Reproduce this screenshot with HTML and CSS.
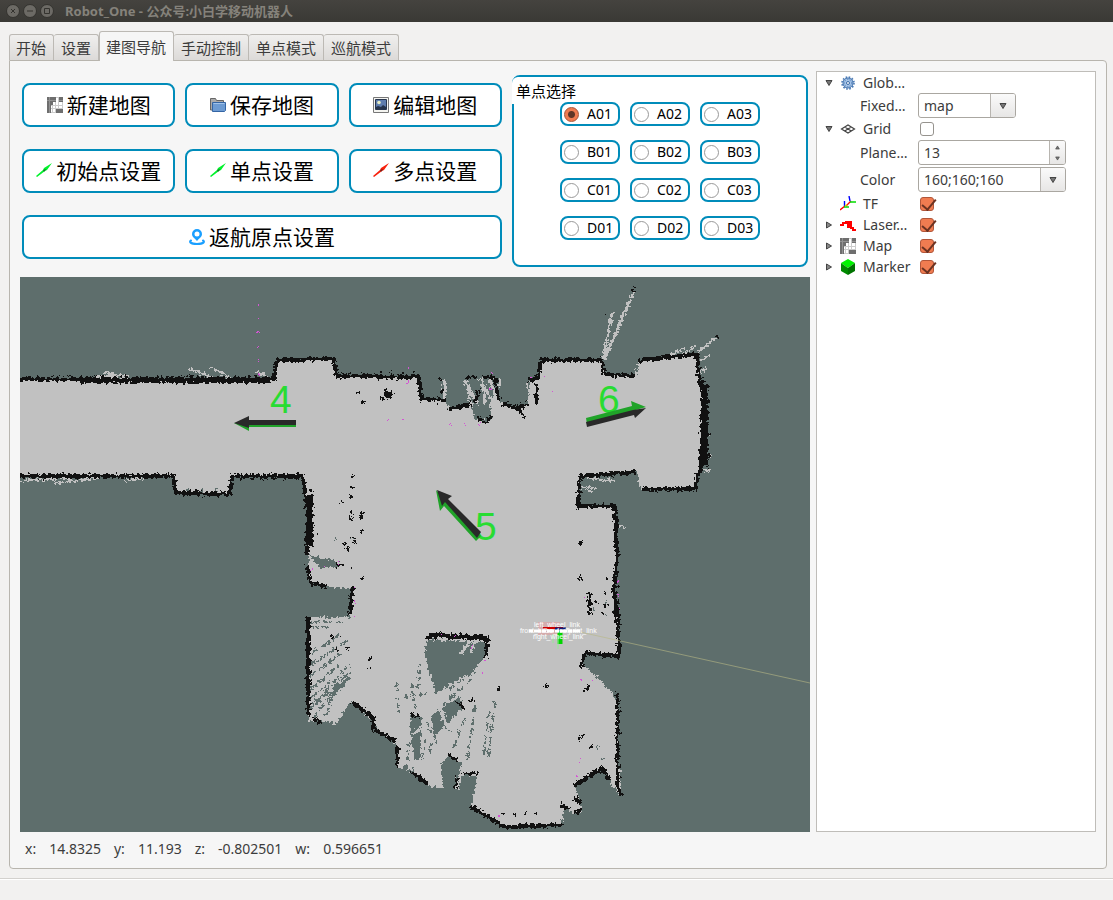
FILE: index.html
```html
<!DOCTYPE html>
<html lang="zh-CN">
<head>
<meta charset="utf-8">
<title>Robot_One - 公众号:小白学移动机器人</title>
<link rel="stylesheet" href="styles.css">
</head>
<body>
<svg class="defs" aria-hidden="true">
  <symbol id="i-map" viewBox="0 0 16 16"><path fill="#fff" stroke="#ccc" d="M.5 .5h15v15H.5z"/><path stroke="#ccc" d="M5.500 0v16M8.500 0v16M11.500 0v16M0 11.500h16M0 8.500h16"/><path fill="#6e6e6e" d="M0 0h9v5H6v3H4v8H0zM12 0h4v5h-4zM9 12h7v4H9z"/><path stroke="#919191" d="M0 3.500h9M2.500 0v16M12 3.500h4"/></symbol>
  <symbol id="i-folder" viewBox="0 0 16 16"><path fill="#aaa" stroke="#666" d="M.5 13V1.500h5l1 2h7V13z"/><path fill="#6d9bd2" stroke="#3465a4" d="M2.500 5.500h13v8l-1 1H2.500z"/><path stroke="#a3c3e8" d="M3.500 6.500h11"/></symbol>
  <symbol id="i-image" viewBox="0 0 16 16"><path fill="#f4f4f0" stroke="#777" d="M.5 .5h15v15H.5z"/><path fill="#5f7dae" stroke="#28364f" d="M2.500 2.500h11v10h-11z"/><path fill="#26344b" d="M3 12v-2l2-1 3 1 2-2 3 2v2z"/><circle cx="6" cy="5.500" r="1.800" fill="#e6edc5"/></symbol>
  <symbol id="i-arrow" viewBox="0 0 16 16"><path fill="currentColor" d="M0 13 7 7 8 5 16 0 11 7 9 8 1 14z"/><path fill="#222" opacity=".6" d="m7 7 3-1-1 2-1 1z"/></symbol>
  <symbol id="i-pin" viewBox="0 0 16 16"><path fill="#1a9fff" fill-rule="evenodd" d="M8 0a5 5 0 0 1 5 5c0 3-2.500 4-5 7-2.500-3-5-4-5-7a5 5 0 0 1 5-5zm0 2.500a2.500 2.500 0 1 0 0 5 2.500 2.500 0 0 0 0-5z"/><path fill="none" stroke="#1a9fff" stroke-width="2" stroke-linecap="round" d="M2 11.500c-2 1-1 3.500 6 3.500s8-2.500 6-3.500"/></symbol>
  <symbol id="i-gear" viewBox="0 0 16 16"><circle cx="8" cy="8" r="5" fill="#a9c6e8" stroke="#3b6ca8"/><circle cx="8" cy="8" r="6" fill="none" stroke="#4a7ab5" stroke-width="1.600" stroke-dasharray="1.600 1.540"/><circle cx="8" cy="8" r="3.500" fill="none" stroke="#5c8bc4" stroke-dasharray="1.500 1"/><circle cx="8" cy="8" r="1.500" fill="#fff" stroke="#3b6ca8"/></symbol>
  <symbol id="i-grid" viewBox="0 0 16 16"><path fill="none" stroke="#444" stroke-width="1.200" d="m1.500 8 6.500-4 6.500 4L8 12zM4.700 6l6.600 4M11.300 6l-6.600 4"/></symbol>
  <symbol id="i-tf" viewBox="0 0 16 16"><g fill="none" stroke-width="1.400"><path stroke="red" d="m0 14 5-4M6 10l5-5"/><path stroke="#00f" d="M4.500 10V5M10 5 9 0"/><path stroke="#0d0" d="M4 11h5M10 6h6"/><path stroke="#dd0" d="m5 10 2-1.500"/></g></symbol>
  <symbol id="i-laser" viewBox="0 0 16 16"><path fill="none" stroke="red" stroke-width="2" d="M0 8h3V6h3V5h2v5h2V5h1v6h2v2h3"/></symbol>
  <symbol id="i-cube" viewBox="0 0 16 16"><path fill="#00f400" d="m8 0 7 4-7 5-7-5z"/><path fill="#008a00" d="m1 4 7 5v7l-7-4z"/><path fill="#007300" d="m15 4-7 5v7l7-4z"/></symbol>
  <symbol id="i-open" viewBox="0 0 8 8"><path fill="#777" stroke="#444" d="M1 1.500h6L4 6.500z"/></symbol>
  <symbol id="i-closed" viewBox="0 0 8 8"><path fill="#888" stroke="#444" d="M1.500 1v6l5-3z"/></symbol>
</svg>
<header class="titlebar">
  <button class="win" aria-label="Close"><svg viewBox="0 0 14 14"><circle cx="7" cy="7" r="6.500"/><path d="m5 5 4 4m0-4-4 4"/></svg></button>
  <button class="win" aria-label="Minimize"><svg viewBox="0 0 14 14"><circle cx="7" cy="7" r="6.500"/><path d="M4 7h6"/></svg></button>
  <button class="win" aria-label="Maximize"><svg viewBox="0 0 14 14"><circle cx="7" cy="7" r="6.500"/><path d="M4.500 4.500h5v5h-5z"/></svg></button>
  <h1>Robot_One - 公众号:小白学移动机器人</h1>
</header>
<main>
  <nav class="tabs" role="tablist">
    <button role="tab">开始</button><button role="tab">设置</button><button role="tab" class="active" aria-selected="true">建图导航</button><button role="tab">手动控制</button><button role="tab">单点模式</button><button role="tab">巡航模式</button>
  </nav>
  <section class="page">
    <div class="left">
      <div class="top">
        <div class="actions">
          <button><svg><use href="#i-map"/></svg>新建地图</button>
          <button><svg><use href="#i-folder"/></svg>保存地图</button>
          <button><svg><use href="#i-image"/></svg>编辑地图</button>
          <button><svg class="green"><use href="#i-arrow"/></svg>初始点设置</button>
          <button><svg class="green"><use href="#i-arrow"/></svg>单点设置</button>
          <button><svg class="red"><use href="#i-arrow"/></svg>多点设置</button>
          <button class="wide"><svg><use href="#i-pin"/></svg>返航原点设置</button>
        </div>
        <fieldset class="points">
          <legend>单点选择</legend>
          <div class="choices">
            <label><input type="radio" name="p" checked>A01</label><label><input type="radio" name="p">A02</label><label><input type="radio" name="p">A03</label>
            <label><input type="radio" name="p">B01</label><label><input type="radio" name="p">B02</label><label><input type="radio" name="p">B03</label>
            <label><input type="radio" name="p">C01</label><label><input type="radio" name="p">C02</label><label><input type="radio" name="p">C03</label>
            <label><input type="radio" name="p">D01</label><label><input type="radio" name="p">D02</label><label><input type="radio" name="p">D03</label>
          </div>
        </fieldset>
      </div>
      <div class="map">
      <svg viewBox="20 277 790 555" preserveAspectRatio="xMidYMid slice" role="img" aria-label="Map">
        <defs>
          <filter id="rough" filterUnits="userSpaceOnUse" x="0" y="270" width="820" height="570" color-interpolation-filters="sRGB"><feTurbulence type="fractalNoise" baseFrequency=".35" numOctaves="2" seed="4"/><feDisplacementMap in="SourceGraphic" scale="7" xChannelSelector="R" yChannelSelector="G"/></filter>
        </defs>
        <path fill="#5e6e6c" d="M0 270h830v570H0z"/>
        <g filter="url(#rough)" shape-rendering="crispEdges" fill="none">
          <path fill="#c1c1c1" d="M10 379H275L277 360H333L337 377H419L421 399 446 400 449 409 471 403 475 420 492 420 490 402 502 402 506 404 516 408 528 404V378H538L540 360H602L604 374 636 376 638 361 660 358 697 354 698 370 703 395 702 470 697 472 696 489H640L637 472 580 476 578 505H615L617 560 615 590 618 618 619 656 588 652 582 662 612 693 617 705V740L622 797 612 785 603 767 575 787 580 803 582 812 574 814 565 806 561 826H505L471 806 477 777 463 774 458 790H454L462 763 450 755 441 763 443 788 430 787 408 770 398 768 397 745 385 738 372 720 350 702 335 726 330 720 309 722 309 617H350L353 588 327 587 310 580 307 520 304 478H232L230 494H176L173 477H10z"/>
          <g stroke="#c1c1c1" stroke-width="2">
            <path d="m603 360 9-47M604 360l18-42 12-26" stroke-width="3"/>
            <path stroke-width="3" d="m478 404-14-24m7 25-5-25m28 24-14-25m17 24-7-24m-5 26-3-27m10 28 9-28M444 380v20"/>
            <path d="m696 354 21-17m-19 26 12-9M665 357l20-9m-5 8 15-10M95 377l22-1m-14-4 25 5m62-8 22 8m-2-10 20 10m25-6 12 5M55 483l45-5m-79 3 60-4m43 4 20-3M703 434l6 1m-6 22 9-1m-9 14 7 1m-9-100 6-2M618 526l8 1m-44-40 15 1m-10-10 27 3m-27 9 5 2"/>
          </g>
          <g fill="#5e6e6c">
            <path d="m426 640 59 2-1 17-14 14-33 19-9-26-3-11zM410 713l12 4-2 11-10 7zM411 736l10-5v27l-6 2zM443 707l17-10 2 10-7 9-8 7zM431 716l8-6 5 15-10 14zM478 405l10 1 3 12h-12zM311 556l25 5 6 5-23 2z"/>
          </g>
          <path stroke="#c1c1c1" stroke-width="3" d="m460 655 12-16m-2 14 6-12"/>
          <g stroke="#5e6e6c" stroke-width="2">
            <path stroke-dasharray="9 3" d="m306 713 45-42m-42 39 40-45m-39 34 20-17m-20 8 29-25m-30 12 33-24m-32 12 38-25m-36 13 27-18m-8 58-17 25m22-33-10 31m4-25-18 11M311 622h32m-33 5h20"/>
            <path stroke-width="4" d="m331 696 18-19"/>
            <path stroke-dasharray="4 3" d="M427 665l10 29m-17-31-2 25m-6-4 4 28m-19-30 2 30m5-16 22-2m1 28 9 21m3-23 11 12m-42 11-1 38m18-42-3 22m10-19-3 14m-24 9 2 33m6-30-1 22m35 4-1 24m-7-20 2 14"/>
            <path stroke-dasharray="8 4" d="m495 701-7 58m1-48-5 44m-9-50-8 57m-2-44-13 34m10-52-7 14m18-36-30 27m31-34-24 18"/>
            <path stroke-width="2" stroke-dasharray="3 11" d="M336 537v4m16-4v6m252 57 14 16m-25-8 14 8m-10 130 7 15m18-24 8 10m-15-65 12 12M186 490h40"/>
          </g>
          <g stroke="#111" stroke-width="4" stroke-linejoin="round">
            <path d="M10 379H274L277 360 333 359 337 376 419 377 421 399 446 400M449 409 471 404M503 403 516 408 528 404M528 380 538 378 541 360H602L604 374 635 376M638 361 660 358 697 354 698 370 703 392 701 470 697 475 696 489H642M636 472 580 476 578 506H615L617 560 614 590 618 618 619 656 585 653 581 667"/>
            <path d="M10 476H173L176 493 230 494 232 476H303L308 514 307 555M307 565 310 582 326 587M352 587 350 615M308 617V715M352 702 373 717 373 728 395 742M411 772 427 783M427 639 431 635 487 638 486 657M470 806 505 827 562 825M574 786 602 768 610 780"/>
            <path stroke-width="5" d="M80 380h190m435 5v80m-395 30v50M430 635l54 3"/>
            <path stroke-width="3" d="M617 692v92l5 12M410 714l10 4M449 755l9 6M463 773l14 1M458 778l-3 11M560 805l9 4M575 798l6 6M574 814l8-5M397 745l1 22M312 719l10 4M479 389l-4 14M477 418l9 5 6-8M465 378l12-1M483 377l12 1 4 23M517 408l8 9M536 384v20M589 592v22M578 577l5 3M545 688l3-4M497 690l4-3M585 691l4-5M578 739l6-3"/>
          </g>
          <g stroke="#111" stroke-width="3">
            <path stroke-dasharray="3 8" d="m352 475 1 22-17 7M350 513l13-1M349 519l15-3M363 530l-25 19M356 540l-10 10M340 564l12 5M309 625v70M311 525l6 10M361 577v6M330 637l12-2M335 650l18-2M369 657v12M358 391l7 16M382 400l-6-10M440 379l2 18"/>
            <path stroke-dasharray="2 9" d="M580 543h2M606 579l8-1M604 592v18M595 602l20 8M591 615l25-3M502 815l38-2M590 746h10M703 380v80M708 400v70M619 700v90M380 372h34M30 476h130M240 478h60M80 377h180M311 490v60M616 510v80"/>
          </g>
          <path fill="#111" d="m384 389 4 3 4-2 1 4-5 6-4-4zM578 541h5v4h-5zM604 314l3-4-1 7zm28-22 3-6v4zM715 336l4-1-2 3zM454 701l9 3 2 7-4-3zm14 1 5-4v4zM336 562l5 4-5 2z"/>
          <g stroke="#d455d4" stroke-width="1"><path stroke-dasharray="2 12" d="M258 304v82m150-18v25m-20 26h20m42 5h30m35-47h30m-52-3-5 25m60-20 5 20M618 580l2 38m-37-20 8 10m-104 37-6 24 3 12m59 22-5 6M310 570l30-8m15 25-1 30m86 17 35 6m-3 6-3 23M579 681l15-3m-14 83-5 20m-99 20 30 20"/></g>
        </g>
        <path stroke="#b7b885" opacity=".6" d="m580 632 230 51"/>
        <g fill="#28dc32" font-family="Liberation Sans, Arial, sans-serif" font-size="39"><text x="270" y="413">4</text><text x="475" y="540">5</text><text x="598" y="413">6</text></g>
        <path fill="#20a329" d="m234 423 15 8v-4h47v-5zM436 490l4 21 4-5 32 35 5-5zM586 418l46-12-1-5 15 6-59 17z"/>
        <path fill="#292929" d="m234 423 15-7v4h47v5h-47v3zM437 490l15 6-4 3 33 33-4 6-32-36-3 4zM586 422l47-12 13-2-11 10-1-3-47 12z"/>
        <g font-family="Liberation Sans, Arial, sans-serif" font-size="7" fill="#fff">
          <path fill="#e89999" d="M538 622h22v13h-22z" opacity=".5"/>
          <path stroke="#c00" stroke-width="2" d="M543 628h20"/><path stroke="#0d1b75" stroke-width="3" d="M555 629h11"/><path stroke="#00d500" stroke-width="5" d="M560 631v13"/><path stroke="#96e896" d="M553 634v9m5-7v13"/>
          <path stroke="#fff" stroke-width="3" stroke-dasharray="4 1 7 1" d="M529 631h52"/>
          <text x="534" y="627">left_wheel_link</text><text x="520" y="633">front_base_footprint_link</text><text x="533" y="639">right_wheel_link</text>
        </g>
      </svg>
      </div>
      <output class="pose"><span>x:</span><span>14.8325</span><span>y:</span><span>11.193</span><span>z:</span><span>-0.802501</span><span>w:</span><span>0.596651</span></output>
    </div>
    <aside class="tree">
      <div class="row"><svg class="tw"><use href="#i-open"/></svg><svg class="ic"><use href="#i-gear"/></svg><span>Glob…</span></div>
      <div class="row sub"><label for="fixed">Fixed…</label><div class="combo short"><select id="fixed"><option>map</option></select><span class="drop"><svg><use href="#i-open"/></svg></span></div></div>
      <div class="row"><svg class="tw"><use href="#i-open"/></svg><svg class="ic"><use href="#i-grid"/></svg><label for="grid">Grid</label><input type="checkbox" id="grid"></div>
      <div class="row sub tall"><label for="plane">Plane…</label><div class="combo"><input type="text" id="plane" value="13"><span class="drop spin"><svg class="up"><use href="#i-open"/></svg><svg><use href="#i-open"/></svg></span></div></div>
      <div class="row sub tall"><label for="color">Color</label><div class="combo"><select id="color"><option>160;160;160</option></select><span class="drop"><svg><use href="#i-open"/></svg></span></div></div>
      <div class="row"><svg class="tw"></svg><svg class="ic"><use href="#i-tf"/></svg><label for="tf">TF</label><input type="checkbox" id="tf" checked></div>
      <div class="row"><svg class="tw"><use href="#i-closed"/></svg><svg class="ic"><use href="#i-laser"/></svg><label for="laser">Laser…</label><input type="checkbox" id="laser" checked></div>
      <div class="row"><svg class="tw"><use href="#i-closed"/></svg><svg class="ic"><use href="#i-map"/></svg><label for="mapc">Map</label><input type="checkbox" id="mapc" checked></div>
      <div class="row"><svg class="tw"><use href="#i-closed"/></svg><svg class="ic"><use href="#i-cube"/></svg><label for="marker">Marker</label><input type="checkbox" id="marker" checked></div>
    </aside>
  </section>
</main>
<footer class="status"></footer>
</body>
</html>
```
FILE: styles.css
```css
* { box-sizing: border-box; }
body { margin: 0; min-height: 100vh; display: flex; flex-direction: column; background: #f2f1f0; color: #3c3c3c; font: 14px/20px "Noto Sans", "Noto Sans CJK SC", sans-serif; }
button, input, select { font: inherit; color: inherit; margin: 0; }
.defs { position: absolute; width: 0; height: 0; }

.titlebar { height: 22px; display: flex; align-items: center; gap: 3px; padding-left: 6px; background: linear-gradient(#45433f, #3a3935); }
.titlebar h1 { margin: 0 0 0 8px; color: #85827b; font: bold 13px/20px "Noto Sans", "Noto Sans CJK SC", sans-serif; }
.win { width: 14px; height: 14px; padding: 0; border: 0; background: none; }
.win svg { display: block; width: 14px; height: 14px; fill: #6c6a65; stroke: #34332f; }
.win path { fill: none; }

main { flex: 1; display: flex; flex-direction: column; padding: 9px 6px 9px 9px; }
.tabs { display: flex; align-items: flex-end; height: 29px; }
.tabs button { height: 26px; padding: 0 7px; border: 1px solid #bcb9b4; border-left-width: 0; border-bottom: 0; border-radius: 3px 3px 0 0; background: linear-gradient(#f0efee, #dcdad8); font-size: 15px; line-height: 20px; white-space: nowrap; }
.tabs button:first-child { padding-left: 6px; border-left-width: 1px; }
.tabs .active { height: 30px; margin-bottom: -1px; padding: 0 7px 0 6px; border-left-width: 1px; background: #f6f6f6; position: relative; }
.page { flex: 1; display: flex; gap: 6px; padding: 10px 10px 8px; border: 1px solid #b8b5ae; border-radius: 0 4px 4px 4px; background: #f6f6f6; }
.left { flex: 1; min-width: 0; display: flex; flex-direction: column; }

.top { display: flex; gap: 10px; padding: 4px 2px 10px; }
.actions { flex: 1; display: grid; grid-template-columns: repeat(3, 1fr); gap: 22px 10px; padding-top: 8px; align-content: start; }
.actions button { height: 44px; display: flex; align-items: center; justify-content: center; gap: 4px; padding: 0; border: 2px solid #008cba; border-radius: 8px; background: #fff; color: #000; font-size: 21px; line-height: 30px; white-space: nowrap; }
.actions svg { width: 16px; height: 16px; flex: none; }
.actions .wide { grid-column: 1 / -1; }
.green { color: #00f22c; }
.red { color: #f8200c; }

.points { width: 296px; flex: none; position: relative; height: 192px; margin: 0; padding: 25px 0 0; border: 2px solid #008cba; border-radius: 8px; background: #fff; color: #000; }
.points legend { position: absolute; top: 0; left: -2px; height: 27px; padding: 4px 0 0 4px; border-radius: 6px 0 0; background: #fff; font-size: 15px; line-height: 20px; }
.choices { position: relative; display: grid; grid-template-columns: repeat(3, 60px); gap: 14px 10px; justify-content: center; }
.choices label { height: 24px; display: flex; align-items: center; gap: 8px; padding: 0 2px; border: 2px solid #008cba; border-radius: 8px; background: #fff; font-size: 14px; line-height: 20px; }
.choices input { appearance: none; flex: none; width: 15px; height: 15px; border: 1px solid #999; border-radius: 50%; background: #fff; }
.choices input:checked { border-color: #a55236; background: radial-gradient(circle, #5f3526 0 3px, #ef7b50 4px); }

.map { flex: 1; min-height: 300px; display: grid; position: relative; background: #5e6e6c; }
.map svg { position: absolute; width: 100%; height: 100%; }
.pose { display: flex; gap: 12px; height: 28px; align-items: center; padding: 6px 5px 0; font-size: 14px; }
.pose span:nth-child(odd) { margin-right: 1px; }
.pose span:nth-child(even) { margin-right: 1px; }

.tree { width: 280px; margin-bottom: 28px; border: 1px solid #bfbdb9; background: #fff; }
.row { height: 21px; display: grid; grid-template-columns: 8px 16px 50px 1fr; column-gap: 7px; align-items: center; padding-left: 8px; }
.row.sub { height: 25px; grid-template-columns: 51px 1fr; padding-left: 43px; }
.row.tall { height: 27px; }
.row.sub .combo { width: 148px; }
.row.sub .short { width: 98px; }
.tw { width: 8px; height: 8px; }
.ic { width: 16px; height: 16px; }
.row label, .row > span { white-space: nowrap; }
.combo { display: flex; height: 25px; border: 1px solid #aaa7a1; border-radius: 3px; background: #fff; overflow: hidden; position: relative; }
.combo select, .combo input { appearance: none; flex: 1; width: 100%; border: 0; padding: 0 5px; background: none; }
.drop { position: absolute; right: 0; top: 0; bottom: 0; width: 25px; display: flex; flex-direction: column; align-items: center; justify-content: center; border-left: 1px solid #b8b5b0; background: linear-gradient(#fafafa, #e7e6e5); pointer-events: none; }
.drop svg { width: 8px; height: 8px; }
.spin { width: 16px; gap: 6px; }
.spin svg { width: 5px; height: 5px; }
.spin .up { transform: rotate(180deg); }
.row input[type="checkbox"] { appearance: none; width: 14px; height: 14px; border: 1px solid #96938e; border-radius: 3px; background: #fff; position: relative; }
.row input[type="checkbox"]:checked { border-color: #b1563a; background: #f07c51; }
.row input[type="checkbox"]:checked::after { content: ""; position: absolute; left: 4px; top: -2px; width: 6px; height: 12px; border: solid #6b3322; border-width: 0 2px 2px 0; transform: rotate(40deg); }
.status { height: 22px; border-top: 1px solid #d3d1ce; box-shadow: inset 0 1px #fff; }
```
